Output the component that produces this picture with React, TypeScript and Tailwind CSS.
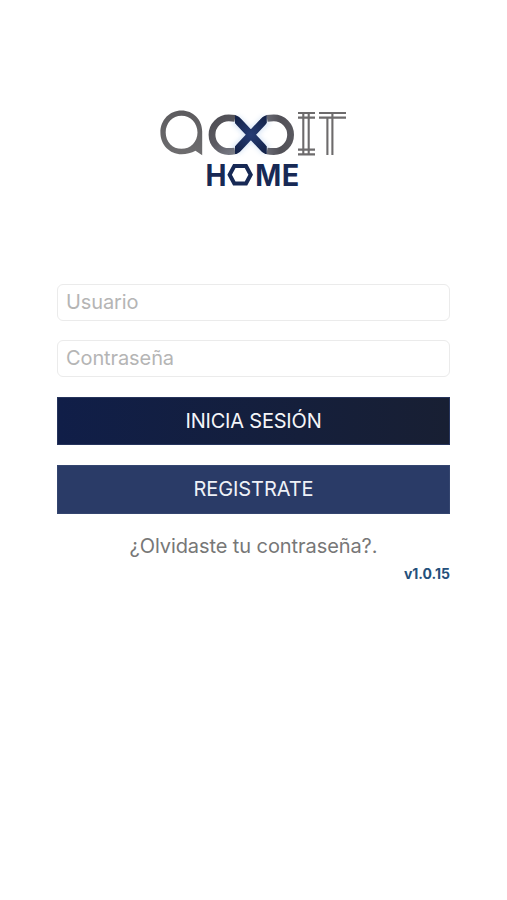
function Logo() {
  return (
    <svg width="200" height="90" viewBox="154 105 200 90" role="img" aria-label="acxoIT HOME">
      <defs>
        <linearGradient id="grey" x1="0" y1="0" x2="0" y2="1">
          <stop offset="0" stopColor="#5c5b5e" />
          <stop offset="1" stopColor="#6e6d6f" />
        </linearGradient>
        <linearGradient id="ringLeft" gradientUnits="userSpaceOnUse" x1="209" y1="115" x2="235" y2="154">
          <stop offset="0" stopColor="#4c4b51" />
          <stop offset="0.6" stopColor="#5c5b62" />
          <stop offset="1" stopColor="#7a7d88" />
        </linearGradient>
        <linearGradient id="ringRight" gradientUnits="userSpaceOnUse" x1="266" y1="0" x2="294" y2="0">
          <stop offset="0" stopColor="#6b6c76" />
          <stop offset="0.5" stopColor="#515057" />
          <stop offset="1" stopColor="#5a595f" />
        </linearGradient>
        <radialGradient id="cross" gradientUnits="userSpaceOnUse" cx="251" cy="134.7" r="22">
          <stop offset="0" stopColor="#263c74" />
          <stop offset="1" stopColor="#14234a" />
        </radialGradient>
        <clipPath id="crossClip">
          <rect x="235" y="115.3" width="31.8" height="38.8" />
        </clipPath>
        <filter id="glow" x="-20%" y="-20%" width="140%" height="140%">
          <feGaussianBlur stdDeviation="2" />
        </filter>
      </defs>
      <path d="M235 119L267 151M235 151L267 119" stroke="#b9d0ee" strokeWidth="11" opacity="0.45" filter="url(#glow)" />
      <path
        fill="url(#grey)"
        fillRule="evenodd"
        d="M181.5 110.5C193 110.5 202.2 119.5 202.2 131.5V155.2L195.5 150.8C191.5 153.2 186.5 154.2 181.5 154.2C169.5 154.2 160.4 144.5 160.4 132.4C160.4 120.2 169.5 110.5 181.5 110.5ZM181.5 115.8C172.5 115.8 165.7 123.2 165.7 132.4C165.7 141.6 172.5 148.8 181.5 148.8C190.5 148.8 197.5 141.6 197.5 132.4C197.5 123.2 190.5 115.8 181.5 115.8Z"
      />
      <path d="M235 118.4Q232 117.9 228.8 117.9A16.800 16.800 0 0 0 228.800 151.500Q232 151.500 235 151" fill="none" stroke="url(#ringLeft)" strokeWidth="6.800" />
      <path d="M267 118.400Q270 117.900 273.800 117.900A16.800 16.800 0 0 1 273.800 151.500Q270 151.500 267 151" fill="none" stroke="url(#ringRight)" strokeWidth="6.800" />
      <path
        d="M232 117.900Q236.500 118.700 239 122L262.800 147.400Q265.300 150.700 270 151.500M232 151.500Q236.500 150.700 239 147.400L262.800 122Q265.300 118.700 270 117.900"
        clipPath="url(#crossClip)"
        fill="none"
        stroke="url(#cross)"
        strokeWidth="7.500"
      />
      <path
        d="M298 113H315M298 117.600H315M303.300 113V154.500M308.700 113V154.500M298 149.600H315M298 154.400H315M319 113H346M319 117.600H346M327.400 117.600V155M332.400 113V155"
        fill="none"
        stroke="#6d6b6c"
        strokeWidth="2.100"
      />
      <g fill="#172955" fontFamily="Inter, sans-serif" fontWeight="700" fontSize="29.500">
        <text x="205.400" y="185.500" textLength="21" lengthAdjust="spacingAndGlyphs">H</text>
        <text x="255.200" y="185.500" textLength="26" lengthAdjust="spacingAndGlyphs">M</text>
        <text x="281.800" y="185.500" textLength="17.500" lengthAdjust="spacingAndGlyphs">E</text>
      </g>
      <path d="M234.300 166H246L250.700 174.700L246 183.400H234.300L229.600 174.700Z" fill="none" stroke="#172955" strokeWidth="4" />
    </svg>
  );
}

const fieldClass =
  "block h-[37px] w-full rounded-md border border-[#ebebeb] bg-white px-2 pb-[2px] text-[20px] tracking-[-0.1px] text-[#555] outline-none placeholder:text-[#b5b5b5]";

export default function App() {
  return (
    <main className="flex h-[900px] w-full flex-col bg-white px-[57px] font-['Inter',sans-serif]">
      <header className="flex justify-center pt-[105px]">
        <Logo />
      </header>
      <form className="mt-[89px] flex flex-col" onSubmit={(e) => e.preventDefault()}>
        <input className={fieldClass} placeholder="Usuario" aria-label="Usuario" />
        <input className={`${fieldClass} mt-[19px]`} type="password" placeholder="Contraseña" aria-label="Contraseña" />
        <button
          type="submit"
          className="mt-[20px] h-[48px] border border-[#26345c] bg-linear-to-r from-[#101e48] to-[#181f33] pb-px text-[20px] tracking-[-0.2px] text-[#f4f5f8]"
        >
          INICIA SESIÓN
        </button>
        <button type="button" className="mt-[20px] h-[49px] border border-[#34456f] bg-[#2a3b67] pb-px text-[20px] tracking-[-0.1px] text-[#eef1f7]">
          REGISTRATE
        </button>
        <a href="#" className="mt-[17px] text-center text-[20px] leading-[30px] tracking-[-0.08px] text-[#777]">
          ¿Olvidaste tu contraseña?.
        </a>
        <p className="mt-[3px] text-right text-[14px] leading-[20px] font-bold text-[#24507b]">v1.0.15</p>
      </form>
    </main>
  );
}
